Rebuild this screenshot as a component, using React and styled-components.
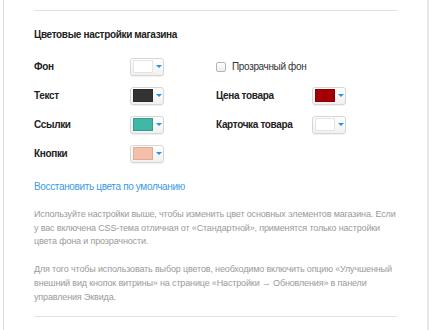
import React from 'react'
import styled, { createGlobalStyle } from 'styled-components'

const Global = createGlobalStyle`
  html, body { margin: 0; padding: 0; background: #fff; }
  body { font-family: "Liberation Sans", Arial, sans-serif; }
`

const Panel = styled.div`
  margin-left: 3px;
  width: 426px;
  height: 330px;
  box-sizing: border-box;
  border-left: 1px solid #dcdcdc;
  border-right: 2px solid #e6e6e6;
  padding: 10px 30px 0 30px;
`

const Divider = styled.div`
  height: 1px;
  background: #e2e2e2;
  margin-top: ${p => p.$top || 0}px;
`

const Title = styled.h3`
  margin: 17px 0 0;
  font-size: 10px;
  letter-spacing: -0.35px;
  font-weight: bold;
  color: #222;
  line-height: 14px;
`

const Grid = styled.div`
  display: grid;
  grid-template-columns: 96px 86px 96px auto;
  grid-auto-rows: 29px;
  align-items: center;
  margin-top: 10px;
`

const Label = styled.div`
  font-size: 10px;
  letter-spacing: -0.35px;
  font-weight: bold;
  color: #222;
`

const PickerBtn = styled.div`
  width: 34px;
  height: 18px;
  box-sizing: border-box;
  border: 1px solid #d6d6d6;
  border-radius: 3px;
  background: linear-gradient(#fff, #f1f1f1);
  box-shadow: 0 1px 1px rgba(0,0,0,0.06);
  display: flex;
  align-items: center;
  padding-left: 2px;
  gap: 3px;
`

const Swatch = styled.span`
  width: 20px;
  height: 13px;
  box-sizing: border-box;
  border: 1px solid ${p => p.$border || 'rgba(0,0,0,0.15)'};
  background: ${p => p.$color};
`

const Arrow = styled.span`
  width: 0;
  height: 0;
  border-left: 3px solid transparent;
  border-right: 3px solid transparent;
  border-top: 3px solid #2b92e6;
`

const Check = styled.label`
  display: flex;
  align-items: center;
  gap: 6px;
  font-size: 10px;
  letter-spacing: -0.35px;
  color: #333;
  grid-column: span 2;
`

const Box = styled.span`
  width: 8px;
  height: 8px;
  border: 1px solid #b5b5b5;
  border-radius: 2px;
  background: linear-gradient(#fff, #eee);
`

const Link = styled.a`
  display: block;
  margin-top: 12px;
  font-size: 10px;
  letter-spacing: -0.35px;
  color: #3b9be8;
  text-decoration: none;
  line-height: 14px;
`

const Note = styled.p`
  margin: 14px 0 0;
  font-size: 9px;
  letter-spacing: -0.15px;
  line-height: 13.7px;
  color: #9a9a9a;
`

const Picker = ({ color, border }) => (
  <PickerBtn>
    <Swatch $color={color} $border={border} />
    <Arrow />
  </PickerBtn>
)

export default function App() {
  return (
    <>
      <Global />
      <Panel>
        <Divider />
        <Title>Цветовые настройки магазина</Title>
        <Grid>
          <Label>Фон</Label>
          <Picker color="#fff" border="#e4e4e4" />
          <Check><Box />Прозрачный фон</Check>

          <Label>Текст</Label>
          <Picker color="#333" />
          <Label>Цена товара</Label>
          <Picker color="#a30005" />

          <Label>Ссылки</Label>
          <Picker color="#3fb8a5" />
          <Label>Карточка товара</Label>
          <Picker color="#fff" border="#e4e4e4" />

          <Label>Кнопки</Label>
          <Picker color="#f5c0ab" border="#e2a993" />
        </Grid>
        <Link href="#">Восстановить цвета по умолчанию</Link>
        <Note>
          Используйте настройки выше, чтобы изменить цвет основных элементов магазина. Если у вас включена CSS-тема отличная от «Стандартной», применятся только настройки цвета фона и прозрачности.
        </Note>
        <Note>
          Для того чтобы использовать выбор цветов, необходимо включить опцию «Улучшенный внешний вид кнопок витрины» на странице «Настройки → Обновления» в панели управления Эквида.
        </Note>
        <Divider $top={12} />
      </Panel>
    </>
  )
}
